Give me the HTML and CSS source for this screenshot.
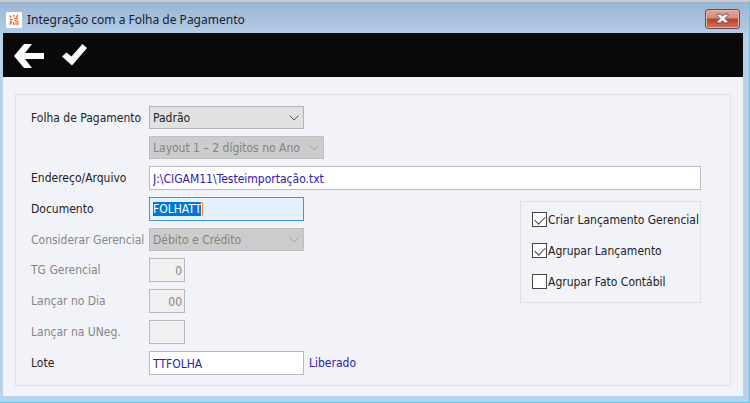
FILE: index.html
```html
<!DOCTYPE html>
<html lang="pt-BR">
<head>
    <meta charset="utf-8">
    <title>Integração com a Folha de Pagamento</title>
    <link rel="stylesheet" href="styles.css">
</head>
<body>
    <div class="janela">
        <header class="titulo">
            <svg class="logo" width="16" height="16" viewBox="0 0 16 16">
                <rect width="16" height="16" rx="1" fill="#fff"/>
                <g fill="none" stroke="#f0783c" stroke-width="1.5">
                    <path d="M3.5 3.5l2 2M7 3l1.5 1.5M12 3l-2 2.5M3.5 7.5h3M8 6.5l4 0M4 9.5l2 0M8.5 8.5l3.5 1M4 12.8v-1.5l2-1M7.5 10v3M10 10.5v2.5M12 10v3"/>
                </g>
            </svg>
            <h1>Integração com a Folha de Pagamento</h1>
            <button class="fechar" type="button" aria-label="Fechar">
                <svg width="13" height="11" viewBox="0 0 13 11">
                    <path d="M1 1h3.5l2 2.2 2-2.2H12v1.5l-3 3 3 3V10H8.5l-2-2.2-2 2.2H1V8.5l3-3-3-3z" fill="#f4f4f4" stroke="#5c5566"/>
                </svg>
            </button>
        </header>

        <nav class="barra">
            <button type="button" aria-label="Voltar">
                <svg width="30" height="24" viewBox="0 0 30 24">
                    <path d="M0 12L10 0h8l-7 9h19v6H11l7 9h-8z" fill="#fff"/>
                </svg>
            </button>
            <button type="button" aria-label="Confirmar">
                <svg width="26" height="22" viewBox="0 0 26 22">
                    <path d="M0 12.5l4.5-4 5 4L20.5 0 25 4 10 21.5z" fill="#fff"/>
                </svg>
            </button>
        </nav>

        <main class="conteudo">
            <form class="painel">
                <label for="folha">Folha de Pagamento</label>
                <span class="combo">
                    <select id="folha"><option>Padrão</option></select>
                    <svg width="10" height="6" viewBox="0 0 10 6"><path d="M.5 .5L5 5 9.5 .5"/></svg>
                </span>

                <span class="combo largo inativo">
                    <select aria-label="Layout" disabled><option>Layout 1 – 2 dígitos no Ano</option></select>
                    <svg width="10" height="6" viewBox="0 0 10 6"><path d="M.5 .5L5 5 9.5 .5"/></svg>
                </span>

                <label for="arquivo">Endereço/Arquivo</label>
                <input class="campo arquivo" id="arquivo" type="text" value="J:\CIGAM11\Testeimportação.txt">

                <label for="documento">Documento</label>
                <span class="documento">
                    <input class="campo medio" id="documento" type="text" value="FOLHATT">
                    <i class="cursor"></i>
                </span>

                <label class="apagado" for="gerencial">Considerar Gerencial</label>
                <span class="combo inativo">
                    <select id="gerencial" disabled><option>Débito e Crédito</option></select>
                    <svg width="10" height="6" viewBox="0 0 10 6"><path d="M.5 .5L5 5 9.5 .5"/></svg>
                </span>

                <label class="apagado" for="tg">TG Gerencial</label>
                <input class="campo curto" id="tg" type="text" value="0" disabled>

                <label class="apagado" for="dia">Lançar no Dia</label>
                <input class="campo curto" id="dia" type="text" value="00" disabled>

                <label class="apagado" for="uneg">Lançar na UNeg.</label>
                <input class="campo curto" id="uneg" type="text" disabled>

                <label for="lote">Lote</label>
                <span class="lote">
                    <input class="campo medio" id="lote" type="text" value="TTFOLHA">
                    <span>Liberado</span>
                </span>

                <div class="opcoes">
                    <label><input type="checkbox" checked>Criar Lançamento Gerencial</label>
                    <label><input type="checkbox" checked>Agrupar Lançamento</label>
                    <label><input type="checkbox">Agrupar Fato Contábil</label>
                </div>
            </form>
        </main>
    </div>
    <script type="text/javascript">
        var campo = document.getElementById('documento');
        campo.focus();
        campo.select();
    </script>
</body>
</html>
```
FILE: styles.css
```css
*{
    box-sizing: border-box;
}
body{
    margin: 0;
    background-color: #b9d1ea;
    font-family: "DejaVu Sans Condensed", "DejaVu Sans", sans-serif;
    font-size: 12px;
    color: #222;
}
.janela{
    min-height: 100vh;
    display: flex;
    flex-direction: column;
    padding: 0 6px 6px 3px;
    border-top: 2px solid #cbcdcc;
    border-right: 1px solid #4fcbee;
    border-bottom: 1px solid #5cc9e8;
    background: linear-gradient(#9ab5d3, #b3cce6 31px, #b9d1ea 32px);
}
.titulo{
    display: flex;
    align-items: center;
    height: 31px;
    padding: 4px 3px 0 3px;
}
.titulo h1{
    flex: 1;
    margin: 0 0 0 5px;
    font-family: "Noto Sans", sans-serif;
    font-size: 12px;
    font-weight: normal;
    color: #17202e;
}
.fechar{
    display: flex;
    align-items: center;
    justify-content: center;
    width: 35px;
    height: 20px;
    margin-bottom: 2px;
    padding: 0;
    border: 1px solid #6d4656;
    border-radius: 3px;
    background: linear-gradient(#e5a79c, #d98978 45%, #bb4027 50%, #d07560);
    box-shadow: inset 0 0 0 1px #e8b3a8;
}
.barra{
    display: flex;
    align-items: center;
    gap: 18px;
    height: 44px;
    padding: 2px 11px 0;
    background-color: #090909;
}
.barra button{
    display: flex;
    padding: 0;
    border: none;
    background: none;
}
.barra button + button{
    margin-bottom: 3px;
}
.conteudo{
    flex: 1;
    padding: 17px 12px 10px;
    background-color: #f2f3f9;
}
.painel{
    display: grid;
    grid-template-columns: 118px 1fr 181px;
    row-gap: 7px;
    align-items: center;
    padding: 11px 29px 10px 15px;
    border: 1px solid #e1e1e4;
}
.painel > *{
    grid-column: 2;
}
.painel > label{
    grid-column: 1;
}
.apagado{
    color: #858589;
}
.combo{
    position: relative;
    width: 155px;
    height: 23px;
}
.combo select{
    appearance: none;
    display: block;
    width: 100%;
    height: 100%;
    padding: 0 4px 0 3px;
    border: 1px solid #b4b4b7;
    border-radius: 0;
    background-color: #e1e1e1;
    font: inherit;
    color: #222;
}
.combo svg{
    position: absolute;
    top: 9px;
    right: 5px;
    fill: none;
    stroke: #555;
    pointer-events: none;
}
.largo{
    width: 175px;
}
.inativo select{
    border-color: #bfbfc1;
    background-color: #ccc;
    color: #838383;
    opacity: 1;
}
.inativo svg{
    stroke: #a5a5a5;
}
.campo{
    height: 24px;
    padding: 2px 2px 0 3px;
    border: 1px solid #b9bac0;
    background-color: #fff;
    font: inherit;
    color: #2a22ae;
}
.arquivo{
    grid-column: 2 / 4;
}
.medio{
    width: 155px;
}
.curto{
    width: 36px;
    background-color: #f0f0f0;
    text-align: right;
    color: #858589;
}
.campo:focus{
    padding-top: 0;
    outline: none;
    border-color: #3d97e0;
    background-color: #e5f1ff;
}
.campo::selection{
    background-color: #0078d7;
    color: #fff;
}
.documento{
    position: relative;
    display: flex;
}
.cursor{
    position: absolute;
    top: 5px;
    left: 53px;
    width: 1px;
    height: 14px;
    background-color: #ff8728;
}
.lote{
    display: flex;
    align-items: center;
    gap: 5px;
    color: #2a22ae;
}
.painel > .opcoes{
    grid-column: 3;
    grid-row: 4 / 8;
    align-self: start;
    display: flex;
    flex-direction: column;
    gap: 16px;
    margin-top: 4px;
    padding: 10px 0 13px 11px;
    border: 1px solid #e1e1e4;
}
.opcoes label{
    display: flex;
    align-items: center;
    gap: 1px;
    height: 15px;
    white-space: nowrap;
}
.opcoes input{
    appearance: none;
    display: flex;
    justify-content: center;
    width: 15px;
    height: 15px;
    margin: 0;
    border: 1px solid #444;
    background-color: #fff;
}
.opcoes input:checked::before{
    content: "";
    width: 5px;
    height: 9px;
    margin-top: 1px;
    border: solid #444;
    border-width: 0 1px 1px 0;
    transform: rotate(45deg);
}
```
